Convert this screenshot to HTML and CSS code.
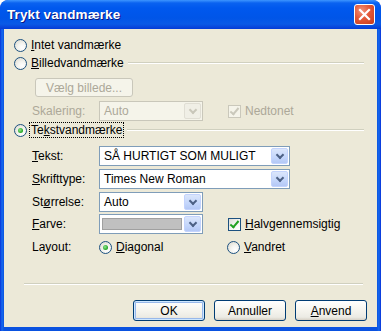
FILE: index.html
```html
<!DOCTYPE html>
<html lang="da">

    <head>
        <meta charset="UTF-8">
        <meta name="viewport" content="width=device-width, initial-scale=1.0">
        <title>Trykt vandmærke</title>
        <link rel="stylesheet" href="styles.css">
    </head>

    <body>
        <div id="window">
            <div class="titlebar">
                <span class="title">Trykt vandmærke</span>
                <div class="close">
                    <svg width="13" height="13" viewBox="0 0 13 13">
                        <path d="M2 2 L11 11 M11 2 L2 11" stroke="#fff" stroke-width="2.2" stroke-linecap="square"/>
                    </svg>
                </div>
            </div>

            <div id="client">
                <div class="row row-intet">
                    <span class="radio"></span>
                    <span class="text"><u>I</u>ntet vandmærke</span>
                </div>

                <div class="row row-billed">
                    <span class="radio"></span>
                    <span class="text"><u>B</u>illedvandmærke</span>
                    <span class="rule"></span>
                </div>

                <div class="row row-vaelg">
                    <button class="btn disabled">Vælg billede...</button>
                </div>

                <div class="row row-skalering">
                    <span class="label disabled">Skalering:</span>
                    <div class="combo small disabled">
                        <span class="value">Auto</span>
                        <span class="drop"></span>
                    </div>
                    <span class="check disabled checked"></span>
                    <span class="text disabled">Nedtonet</span>
                </div>

                <div class="row row-tekst">
                    <span class="radio on"></span>
                    <span class="text focus">Te<u>k</u>stvandmærke</span>
                    <span class="rule"></span>
                </div>

                <div class="row row-field first">
                    <span class="label"><u>T</u>ekst:</span>
                    <div class="combo wide">
                        <span class="value">SÅ HURTIGT SOM MULIGT</span>
                        <span class="drop"></span>
                    </div>
                </div>

                <div class="row row-field">
                    <span class="label"><u>S</u>krifttype:</span>
                    <div class="combo wide">
                        <span class="value">Times New Roman</span>
                        <span class="drop"></span>
                    </div>
                </div>

                <div class="row row-field">
                    <span class="label">St<u>ø</u>rrelse:</span>
                    <div class="combo small">
                        <span class="value">Auto</span>
                        <span class="drop"></span>
                    </div>
                </div>

                <div class="row row-field tight">
                    <span class="label"><u>F</u>arve:</span>
                    <div class="combo small">
                        <span class="swatch"></span>
                        <span class="drop"></span>
                    </div>
                    <span class="check checked"></span>
                    <span class="text"><u>H</u>alvgennemsigtig</span>
                </div>

                <div class="row row-layout">
                    <span class="label">Layout:</span>
                    <div class="opt">
                        <span class="radio on"></span>
                        <span class="text"><u>D</u>iagonal</span>
                    </div>
                    <div class="opt">
                        <span class="radio"></span>
                        <span class="text"><u>V</u>andret</span>
                    </div>
                </div>

                <div class="separator"></div>

                <div class="buttons">
                    <button class="btn default">OK</button>
                    <button class="btn">Annuller</button>
                    <button class="btn"><u>A</u>nvend</button>
                </div>
            </div>
        </div>
    </body>

</html>
```

FILE: styles.css
```css
html {
    height: 100%;
}

body {
    margin: 0px;
    width: 381px;
    height: 331px;
    overflow: hidden;
    font-family: "Liberation Sans", Arial, sans-serif;
    font-size: 12px;
    color: #000;
    background: #fff;
}

body * {
    box-sizing: border-box;
}

u {
    text-decoration: underline;
    text-underline-offset: 1px;
}

#window {
    width: 381px;
    height: 331px;
    display: flex;
    flex-direction: column;
    border-radius: 8px 8px 0px 0px;
    background: linear-gradient(to right, #0831d9 0px, #166aee 2px, #0a52e0 4px, #0a52e0 377px, #166aee 379px, #0831d9 381px);
    overflow: hidden;
}

.titlebar {
    height: 29px;
    flex: none;
    display: flex;
    align-items: center;
    justify-content: space-between;
    padding: 0px 6px 1px 7px;
    background: linear-gradient(to bottom, #3d95ff 0px, #0a62f0 3px, #0058ee 8px, #0055e8 18px, #0a5ae6 24px, #0841d9 28px, #003dd7 29px);
    border-radius: 8px 8px 0px 0px;
}

.title {
    color: #fff;
    font-weight: bold;
    font-size: 13.5px;
    letter-spacing: 0.1px;
    text-shadow: 1px 1px 0px #0a1883;
}

.close {
    width: 21px;
    height: 21px;
    margin-top: 1px;
    border: 1px solid #fff;
    border-radius: 3px;
    display: flex;
    align-items: center;
    justify-content: center;
    background: radial-gradient(circle at 35% 30%, #f2927a 0%, #e35838 45%, #c53b1c 100%);
}

#client {
    flex: 1;
    margin: 0px 4px 4px 4px;
    background: #ece9d8;
    padding: 7px 0px 0px 10px;
    display: flex;
    flex-direction: column;
}

.row {
    display: flex;
    align-items: center;
    height: 18px;
    flex: none;
}

.text {
    margin-left: 4px;
    white-space: nowrap;
}

.disabled {
    color: #aca899;
}

.rule {
    flex: 1;
    height: 2px;
    margin: 0px 13px 0px 4px;
    border-top: 1px solid #d0d0bf;
    border-bottom: 1px solid #fff;
}

.radio {
    width: 13px;
    height: 13px;
    flex: none;
    border-radius: 50%;
    border: 1px solid #1c5180;
    background: radial-gradient(circle at 65% 70%, #ffffff 0%, #f4f4f0 40%, #d8d5c8 100%);
    position: relative;
}

.radio.on::after {
    content: "";
    position: absolute;
    left: 3px;
    top: 3px;
    width: 5px;
    height: 5px;
    border-radius: 50%;
    background: radial-gradient(circle at 40% 40%, #8ee88e 0%, #21a121 70%);
}

.check {
    width: 13px;
    height: 13px;
    flex: none;
    border: 1px solid #1c5180;
    background: linear-gradient(135deg, #dcdcd7 0%, #f4f4f0 50%, #ffffff 100%);
    position: relative;
}

.check.checked::after {
    content: "";
    position: absolute;
    left: 3px;
    top: 0px;
    width: 3px;
    height: 7px;
    border-right: 2px solid #21a121;
    border-bottom: 2px solid #21a121;
    transform: rotate(40deg);
}

.check.disabled {
    border-color: #cac8bb;
    background: #f5f4ea;
}

.check.disabled.checked::after {
    border-color: #cac8bb;
}

.label {
    width: 67px;
    margin-left: 18px;
    flex: none;
    white-space: nowrap;
}

.opt {
    width: 128px;
    display: flex;
    align-items: center;
    flex: none;
}

.row-vaelg {
    margin-top: 6px;
    height: 19px;
    padding-left: 21px;
}

.row-skalering {
    margin-top: 4px;
    height: 20px;
}

.row-skalering .check,
.row-field .check {
    margin-left: 25px;
}

.focus {
    outline: 1px dotted #000;
    outline-offset: 0px;
    padding: 0px 1px;
    margin-left: 3px;
    line-height: 14px;
}

.row-field {
    height: 20px;
    margin-top: 3px;
}

.row-field.first {
    margin-top: 7px;
}

.row-field.tight {
    margin-top: 2px;
}

.row-layout {
    margin-top: 4px;
}

.combo {
    height: 20px;
    display: flex;
    align-items: stretch;
    border: 1px solid #7f9db9;
    background: #fff;
    padding: 1px;
}

.combo.wide {
    width: 191px;
}

.combo.small {
    width: 104px;
}

.combo .value {
    flex: 1;
    padding-left: 3px;
    display: flex;
    align-items: center;
    white-space: nowrap;
    overflow: hidden;
}

.combo .swatch {
    flex: 1;
    margin: 2px 2px 2px 1px;
    background: #c0c0c0;
    border: 1px solid #a0a0a0;
}

.drop {
    width: 17px;
    flex: none;
    border-radius: 2px;
    background: linear-gradient(to bottom, #dbe6fb 0%, #c4d6fb 60%, #b4c8f6 100%);
    border: 1px solid #c3d3fd;
    position: relative;
}

.drop::after {
    content: "";
    position: absolute;
    left: 5px;
    top: 3px;
    width: 4px;
    height: 4px;
    border-right: 2px solid #4d6185;
    border-bottom: 2px solid #4d6185;
    transform: rotate(45deg);
}

.combo.disabled {
    border-color: #c9c7ba;
    background: #f5f4ea;
}

.combo.disabled .drop {
    background: #f0efe6;
    border-color: #e0ded4;
}

.combo.disabled .drop::after {
    border-color: #c9c7ba;
}

.btn {
    font: inherit;
    color: #000;
    height: 21px;
    width: 72px;
    padding: 0px;
    border: 1px solid #003c74;
    border-radius: 3px;
    background: linear-gradient(to bottom, #ffffff 0%, #f5f4ee 50%, #ecebe4 85%, #d6d0c5 100%);
}

.btn.disabled {
    width: 98px;
    height: 19px;
    border-color: #c9c7ba;
    background: #f5f4ea;
    color: #aca899;
}

.btn.default {
    box-shadow: inset 0px 0px 0px 1px #cee7ff, inset 0px 0px 0px 2px #98b8ea;
}

.separator {
    margin: 27px 14px 0px 10px;
    height: 2px;
    flex: none;
    border-top: 1px solid #d0d0bf;
    border-bottom: 1px solid #fff;
}

.buttons {
    margin-top: 15px;
    display: flex;
    justify-content: flex-end;
    gap: 9px;
    padding-right: 10px;
}
```
